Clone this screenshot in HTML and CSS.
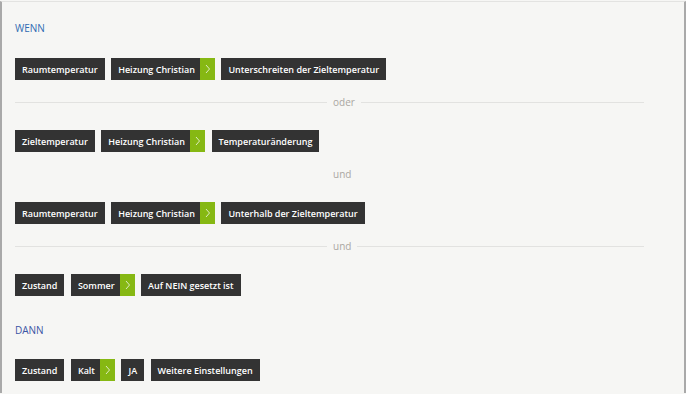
FILE: index.html
```html
<!DOCTYPE html>
<html lang="de">
<head>
<meta charset="utf-8">
<link rel="stylesheet" href="styles.css">
</head>
<body>
<div class="frame">
  <div class="panel">
    <div class="heading">WENN</div>

    <div class="row">
      <span class="chip">Raumtemperatur</span>
      <span class="chip chip-arrow">Heizung Christian<span class="go"><svg width="15" height="22" viewBox="0 0 15 22"><polyline points="6,7 9.5,11 6,15" /></svg></span></span>
      <span class="chip">Unterschreiten der Zieltemperatur</span>
    </div>

    <div class="sep"><span class="line left"></span><span class="word">oder</span><span class="line right"></span></div>

    <div class="row">
      <span class="chip">Zieltemperatur</span>
      <span class="chip chip-arrow">Heizung Christian<span class="go"><svg width="15" height="22" viewBox="0 0 15 22"><polyline points="6,7 9.5,11 6,15" /></svg></span></span>
      <span class="chip">Temperaturänderung</span>
    </div>

    <div class="sep plain"><span class="line left"></span><span class="word">und</span><span class="line right"></span></div>

    <div class="row">
      <span class="chip">Raumtemperatur</span>
      <span class="chip chip-arrow">Heizung Christian<span class="go"><svg width="15" height="22" viewBox="0 0 15 22"><polyline points="6,7 9.5,11 6,15" /></svg></span></span>
      <span class="chip">Unterhalb der Zieltemperatur</span>
    </div>

    <div class="sep"><span class="line left"></span><span class="word">und</span><span class="line right"></span></div>

    <div class="row">
      <span class="chip">Zustand</span>
      <span class="chip chip-arrow">Sommer<span class="go"><svg width="15" height="22" viewBox="0 0 15 22"><polyline points="6,7 9.5,11 6,15" /></svg></span></span>
      <span class="chip">Auf NEIN gesetzt ist</span>
    </div>

    <div class="heading heading-then">DANN</div>

    <div class="row">
      <span class="chip">Zustand</span>
      <span class="chip chip-arrow">Kalt<span class="go"><svg width="15" height="22" viewBox="0 0 15 22"><polyline points="6,7 9.5,11 6,15" /></svg></span></span>
      <span class="chip">JA</span>
      <span class="chip">Weitere Einstellungen</span>
    </div>
  </div>
</div>
</body>
</html>
```

FILE: styles.css
```css
html, body {
  margin: 0;
  padding: 0;
  background: #f6f6f4;
}

body {
  font-family: "Open Sans", "DejaVu Sans", sans-serif;
  width: 686px;
  height: 394px;
  overflow: hidden;
}

.frame {
  padding-top: 1px;
  height: 393px;
  box-sizing: border-box;
}

.panel {
  height: 100%;
  box-sizing: border-box;
  border-top: 1px solid #e3e3e1;
  border-left: 2px solid #a9a9a9;
  border-right: 2px solid #a9a9a9;
  padding: 19px 0 0 13px;
}

.heading {
  font-size: 10px;
  line-height: 14px;
  color: #2f6bb3;
  margin-bottom: 23px;
}

.heading-then {
  color: #3b55a4;
  margin-top: 27px;
  margin-bottom: 22px;
}

.row {
  display: flex;
  gap: 6.5px;
  height: 22px;
}

.chip {
  display: flex;
  align-items: center;
  background: #333333;
  color: #ffffff;
  font-size: 9px;
  font-weight: 600;
  height: 22px;
  padding: 0 7px;
}

.chip-arrow {
  padding-right: 0;
}

.go {
  display: block;
  width: 15px;
  height: 22px;
  margin-left: 5px;
  background: #86b813;
}

.go svg {
  display: block;
}

.go polyline {
  fill: none;
  stroke: #dcebbf;
  stroke-width: 1;
}

.sep {
  display: flex;
  align-items: center;
  height: 14px;
  margin: 15px 0 21px;
  width: 629px;
}

.line {
  height: 1px;
  background: #e2e2e0;
}

.line.left {
  width: 312px;
}

.line.right {
  flex: 1;
}

.plain .line {
  background: transparent;
}

.word {
  font-size: 10px;
  color: #aaa7a2;
  padding: 0 6px;
  line-height: 14px;
}
```
